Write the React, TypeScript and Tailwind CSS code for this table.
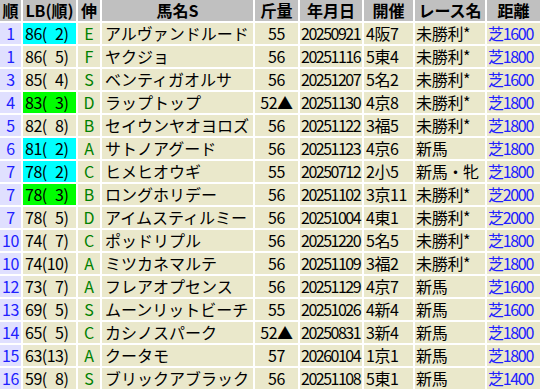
const ROWS = [
  { rank: "1", lb: "86(\u20072)", hl: "cyan", nobi: "E", name: "アルヴァンドルード", kin: "55", date: "20250921", kai: "4阪7", race: "未勝利*", dist: "芝1600" },
  { rank: "1", lb: "86(\u20075)", hl: "", nobi: "F", name: "ヤクジョ", kin: "56", date: "20251116", kai: "5東4", race: "未勝利*", dist: "芝1800" },
  { rank: "3", lb: "85(\u20074)", hl: "", nobi: "S", name: "ベンティガオルサ", kin: "56", date: "20251207", kai: "5名2", race: "未勝利*", dist: "芝1600" },
  { rank: "4", lb: "83(\u20073)", hl: "green", nobi: "D", name: "ラップトップ", kin: "52▲", date: "20251130", kai: "4京8", race: "未勝利*", dist: "芝1800" },
  { rank: "5", lb: "82(\u20078)", hl: "", nobi: "B", name: "セイウンヤオヨロズ", kin: "56", date: "20251122", kai: "3福5", race: "未勝利*", dist: "芝1800" },
  { rank: "6", lb: "81(\u20072)", hl: "cyan", nobi: "A", name: "サトノアグード", kin: "56", date: "20251123", kai: "4京6", race: "新馬", dist: "芝1800" },
  { rank: "7", lb: "78(\u20072)", hl: "cyan", nobi: "C", name: "ヒメヒオウギ", kin: "55", date: "20250712", kai: "2小5", race: "新馬・牝", dist: "芝1800" },
  { rank: "7", lb: "78(\u20073)", hl: "green", nobi: "B", name: "ロングホリデー", kin: "56", date: "20251102", kai: "3京11", race: "未勝利*", dist: "芝2000" },
  { rank: "7", lb: "78(\u20075)", hl: "", nobi: "D", name: "アイムスティルミー", kin: "56", date: "20251004", kai: "4東1", race: "未勝利*", dist: "芝2000" },
  { rank: "10", lb: "74(\u20077)", hl: "", nobi: "C", name: "ポッドリプル", kin: "56", date: "20251220", kai: "5名5", race: "未勝利*", dist: "芝1800" },
  { rank: "10", lb: "74(10)", hl: "", nobi: "A", name: "ミツカネマルテ", kin: "56", date: "20251109", kai: "3福2", race: "未勝利*", dist: "芝1800" },
  { rank: "12", lb: "73(\u20077)", hl: "", nobi: "A", name: "フレアオプセンス", kin: "56", date: "20251129", kai: "4京7", race: "新馬", dist: "芝1600" },
  { rank: "13", lb: "69(\u20075)", hl: "", nobi: "S", name: "ムーンリットビーチ", kin: "55", date: "20251026", kai: "4新4", race: "新馬", dist: "芝1600" },
  { rank: "14", lb: "65(\u20075)", hl: "", nobi: "C", name: "カシノスパーク", kin: "52▲", date: "20250831", kai: "3新4", race: "新馬", dist: "芝1800" },
  { rank: "15", lb: "63(13)", hl: "", nobi: "A", name: "クータモ", kin: "57", date: "20260104", kai: "1京1", race: "新馬", dist: "芝1800" },
  { rank: "16", lb: "59(\u20078)", hl: "", nobi: "S", name: "ブリックアブラック", kin: "56", date: "20251108", kai: "5東1", race: "新馬", dist: "芝1400" },
]

const HEADERS = ["順", "LB(順)", "伸", "馬名S", "斤量", "年月日", "開催", "レース名", "距離"]

// fixed row height, the table packs 17 rows into 389px
const cell = "h-[21px] leading-[21px] whitespace-pre"

export default function App() {
  return (
    <div
      className="w-[540px] h-[389px] overflow-hidden bg-white text-[16px] text-black"
      style={{ fontFamily: '"Noto Sans CJK JP", "Noto Sans", sans-serif' }}
    >
      <div className="grid grid-cols-[21px_53px_22px_151px_43px_62px_49px_70px_53px] gap-[2px]">
        {HEADERS.map((h) => (
          <div key={h} className={`${cell} bg-[#c0c0c0] text-center font-bold`}>
            {h}
          </div>
        ))}

        {ROWS.map((r, i) => (
          <div key={i} className="contents">
            <div className={`${cell} bg-[#e0e0ff] text-center tracking-[-0.5px] text-[#2020ff]`}>{r.rank}</div>
            <div
              className={`${cell} pl-[2px] tracking-[-0.5px] ${
                r.hl === "cyan" ? "bg-[#00ffff]" : r.hl === "green" ? "bg-[#00ff00]" : "bg-[#eae8cb]"
              }`}
            >
              {r.lb}
            </div>
            <div className={`${cell} bg-[#eae8cb] text-center text-[#008000]`}>{r.nobi}</div>
            <div className={`${cell} bg-[#eae8cb] pl-[3px]`}>{r.name}</div>
            <div className={`${cell} bg-[#eae8cb] text-center tracking-[-0.5px]`}>{r.kin}</div>
            <div className={`${cell} bg-[#eae8cb] pl-[1px] tracking-[-1.5px]`}>{r.date}</div>
            <div className={`${cell} bg-[#eae8cb] pl-[2px] tracking-[-0.4px]`}>{r.kai}</div>
            <div className={`${cell} bg-[#eae8cb] pl-[1px] tracking-[-0.3px]`}>{r.race}</div>
            <div className={`${cell} bg-[#eae8cb] pl-[1px] tracking-[-1.3px] text-[#2020ff]`}>{r.dist}</div>
          </div>
        ))}
      </div>
    </div>
  )
}
